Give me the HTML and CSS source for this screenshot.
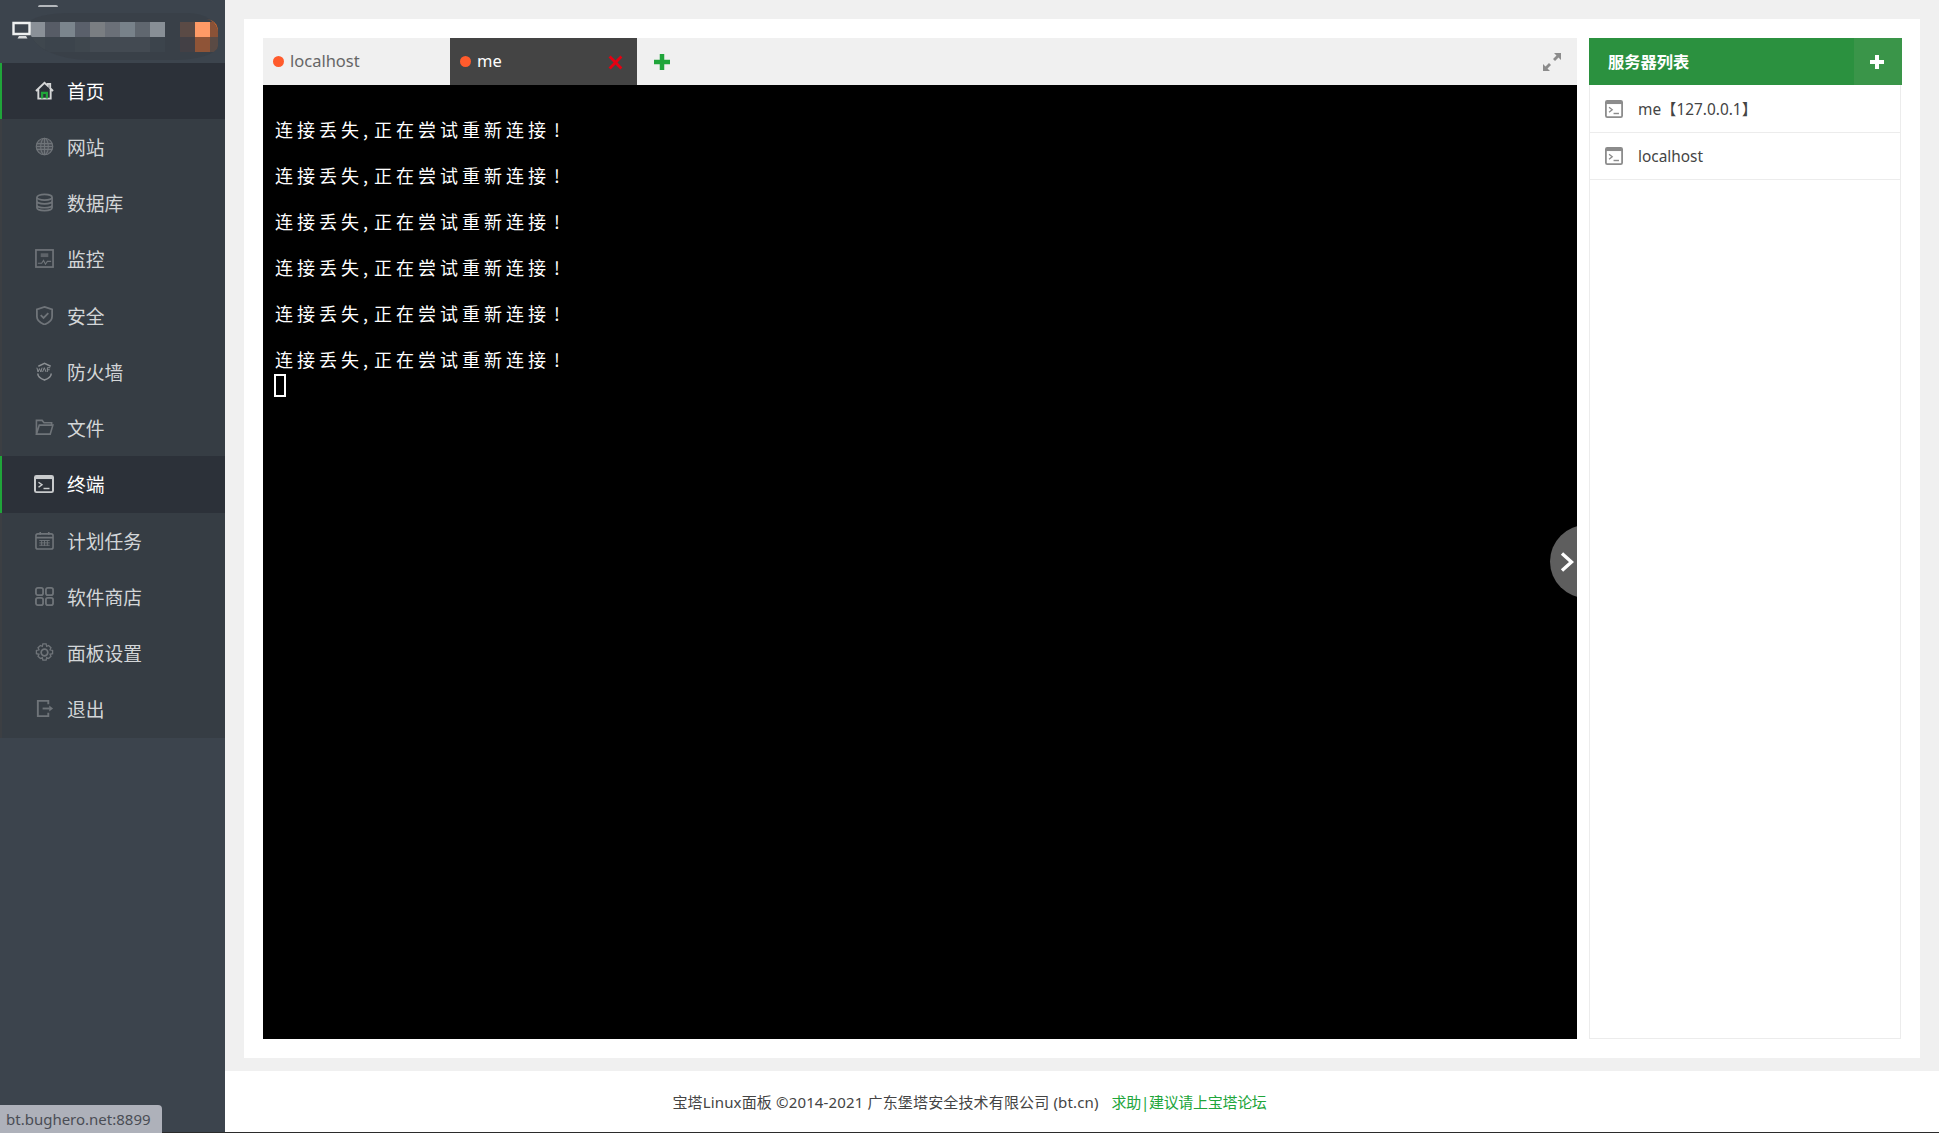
FILE: index.html
```html
<!DOCTYPE html>
<html lang="zh-CN">
<head>
<meta charset="utf-8">
<title>终端</title>
<link rel="stylesheet" href="styles.css">
</head>
<body>
<svg class="defs" width="0" height="0" aria-hidden="true">
  <symbol id="term" viewBox="0 0 20 20" preserveAspectRatio="none">
    <rect x="1" y="1" width="18" height="18" rx="1.5" fill="none" stroke="currentColor" stroke-width="2"/>
    <rect x="1" y="1" width="18" height="3.500" fill="currentColor"/>
    <path d="M4.500 8l3.500 2.800-3.500 2.800" fill="none" stroke="currentColor" stroke-width="1.500"/>
    <path d="M9.500 15h6" stroke="currentColor" stroke-width="1.600"/>
  </symbol>
</svg>
<div class="page">
  <aside class="sidebar">
    <div class="logo">
      <span class="arc"></span>
      <svg class="monitor" viewBox="0 0 20 20" width="20" height="20"><path d="M1.500 3h16v11h-16z" fill="none" stroke="#eef0f0" stroke-width="2.400"/><path d="M7 16h7l1.500 2.500h-10z" fill="#d8dadb"/></svg>
      <span class="crescent"></span>
      <div class="blur">
        <div class="blur-row">
          <i class="c1"></i><i class="c2"></i><i class="c3"></i><i class="c4"></i><i class="c5"></i><i class="c6"></i><i class="c7"></i><i class="c8"></i><i class="c9"></i><i class="c0"></i><i class="c10"></i><i class="c11"></i><i class="c12"></i>
        </div>
        <div class="blur-row">
          <i class="d1"></i><i class="d2"></i><i class="d2"></i><i class="d1"></i><i class="d3"></i><i class="d3"></i><i class="d3"></i><i class="d3"></i><i class="d2"></i><i class="c0"></i><i class="d4"></i><i class="d5"></i><i class="d6"></i>
        </div>
      </div>
    </div>
    <nav class="menu">
      <a class="item active"><svg class="ico" viewBox="0 0 20 20"><path d="M1 10.500l9-8.500 3.500 3.200V3h2.500v4.700l3 2.800M3.500 9v9.500h13V9" fill="none" stroke="#d5d6d7" stroke-width="2"/><path d="M7.500 18.500v-6h5v6" fill="none" stroke="#20a53a" stroke-width="2.400"/></svg>首页</a>
      <a class="item"><svg class="ico" viewBox="0 0 20 20"><g fill="none" stroke="currentColor" stroke-width="1.200"><circle cx="10" cy="10" r="8.700" fill="currentColor" fill-opacity=".35"/><ellipse cx="10" cy="10" rx="4" ry="8.700"/><path d="M10 1.300v17.400M1.800 7h16.400M1.800 13h16.400M1.300 10h17.400"/></g></svg>网站</a>
      <a class="item"><svg class="ico" viewBox="0 0 20 20"><g fill="none" stroke="currentColor" stroke-width="1.700"><ellipse cx="10" cy="4.500" rx="8" ry="3"/><path d="M2 4.500v11c0 1.700 3.600 3 8 3s8-1.300 8-3v-11M2 8.500c0 1.700 3.600 3 8 3s8-1.300 8-3M2 12.500c0 1.700 3.600 3 8 3s8-1.300 8-3"/></g></svg>数据库</a>
      <a class="item"><svg class="ico" viewBox="0 0 20 20"><rect x="1" y="1" width="18" height="18" fill="none" stroke="currentColor" stroke-width="1.800"/><path d="M6 4.500h8v4H6z" fill="currentColor" fill-opacity=".7"/><path d="M3 15h4l2-3 2 4 2-3h4" fill="none" stroke="currentColor" stroke-width="1.200"/></svg>监控</a>
      <a class="item"><svg class="ico" viewBox="0 0 20 20"><path d="M10 1l8 2.500V11c0 4-4 7-8 8.500C6 18 2 15 2 11V3.500z" fill="none" stroke="currentColor" stroke-width="1.900"/><path d="M6 9.500l3 3 5-5" fill="none" stroke="currentColor" stroke-width="1.900"/></svg>安全</a>
      <a class="item"><svg class="ico" viewBox="0 0 20 20"><path d="M3 12v.5c0 2.800 3.500 5 7 6.500 3.500-1.500 7-3.700 7-6.500V12" fill="none" stroke="#8b8f93" stroke-width="1.600"/><path d="M3.500 4.500L10 1.500l6.500 3" fill="none" stroke="#8b8f93" stroke-width="1.600"/><path d="M2 6l1.200 4.500L4.700 7l1.500 3.500L7.400 6M8 10.500L9.800 6l1.800 4.500M13 10.500V6h3M13 8.200h2.500" fill="none" stroke="#8b8f93" stroke-width="1"/></svg>防火墙</a>
      <a class="item"><svg class="ico" viewBox="0 0 20 20"><path d="M1.500 17V2.500h6l2 2.500h8v2.500M1.500 17h14.500L18.800 7.500H4.500z" fill="none" stroke="currentColor" stroke-width="1.700"/></svg>文件</a>
      <a class="item active"><svg class="ico term" viewBox="0 0 20 20" preserveAspectRatio="none"><use href="#term"/></svg>终端</a>
      <a class="item"><svg class="ico" viewBox="0 0 20 20"><rect x="1" y="3" width="18" height="16" rx="2" fill="none" stroke="currentColor" stroke-width="1.700"/><path d="M1 7h18M5.500 1v3M14.500 1v3" stroke="currentColor" stroke-width="1.700"/><path d="M4.500 10h11M4.500 12.500h11M4.500 15h11M7 9.500v6M10 9.500v6M13 9.500v6" stroke="currentColor" stroke-width="1"/></svg>计划任务</a>
      <a class="item"><svg class="ico" viewBox="0 0 20 20"><g fill="none" stroke="currentColor" stroke-width="1.900"><rect x="1" y="1" width="7.500" height="7.500" rx="2"/><rect x="11.500" y="1" width="7.500" height="7.500" rx="2"/><rect x="1" y="11.500" width="7.500" height="7.500" rx="2"/><rect x="11.500" y="11.500" width="7.500" height="7.500" rx="2"/></g></svg>软件商店</a>
      <a class="item"><svg class="ico" viewBox="0 0 20 20"><g fill="none" stroke="currentColor" stroke-width="1.800"><circle cx="10" cy="10" r="3.500"/><path d="M8.300 1h3.400l.6 2.500 2-.9 2.500 2.400-1 2.100 2.700.7v3.400l-2.700.7 1 2.100-2.500 2.400-2-.9-.6 2.500H8.300l-.6-2.500-2 .9-2.500-2.400 1-2.100-2.700-.7V7.800l2.700-.7-1-2.100 2.500-2.400 2 .9z" stroke-width="1.400"/></g></svg>面板设置</a>
      <a class="item"><svg class="ico" viewBox="0 0 20 20"><path d="M14 5.500V2H3v16h11v-3.500" fill="none" stroke="currentColor" stroke-width="2"/><path d="M8 10h7.500" stroke="currentColor" stroke-width="2"/><path d="M15 6.800L19 10l-4 3.200z" fill="currentColor"/></svg>退出</a>
    </nav>
  </aside>

  <div class="main">
    <div class="content">
      <section class="card">
        <div class="term-pane">
          <div class="tabs">
            <div class="tab"><span class="dot"></span>localhost</div>
            <div class="tab tab-on"><span class="dot"></span>me<svg class="close" viewBox="0 0 14 14" width="15" height="15"><path d="M1.500 1.500l11 11M12.500 1.500l-11 11" stroke="#e60012" stroke-width="2.600"/></svg></div>
            <svg class="add" viewBox="0 0 18 18" width="18" height="18"><path d="M9 1v16M1 9h16" stroke="#20a53a" stroke-width="4.500"/></svg>
            <svg class="expand" viewBox="0 0 20 20" width="20" height="20"><g fill="#8c8c8c"><path d="M12 1h7v7l-2.500-2.500-3.500 3.500-2-2 3.500-3.500z"/><path d="M8 19H1v-7l2.500 2.500 3.500-3.500 2 2-3.500 3.500z"/></g></svg>
          </div>
          <div class="screen">
            <div class="line"><span class="msg">连接丢失</span><span class="comma">,</span><span class="msg">正在尝试重新连接</span><span class="bang">!</span></div>
            <div class="line"><span class="msg">连接丢失</span><span class="comma">,</span><span class="msg">正在尝试重新连接</span><span class="bang">!</span></div>
            <div class="line"><span class="msg">连接丢失</span><span class="comma">,</span><span class="msg">正在尝试重新连接</span><span class="bang">!</span></div>
            <div class="line"><span class="msg">连接丢失</span><span class="comma">,</span><span class="msg">正在尝试重新连接</span><span class="bang">!</span></div>
            <div class="line"><span class="msg">连接丢失</span><span class="comma">,</span><span class="msg">正在尝试重新连接</span><span class="bang">!</span></div>
            <div class="line"><span class="msg">连接丢失</span><span class="comma">,</span><span class="msg">正在尝试重新连接</span><span class="bang">!</span></div>
            <div class="cursor"></div>
            <div class="toggle"><svg viewBox="0 0 14 20" width="14" height="20"><path d="M2 1.500L11.500 10 2 18.500" fill="none" stroke="#fff" stroke-width="3.400"/></svg></div>
          </div>
        </div>
        <div class="servers">
          <div class="servers-head"><span class="servers-title">服务器列表</span><span class="servers-add"><svg viewBox="0 0 16 16" width="16" height="16"><path d="M8 1v14M1 8h14" stroke="#fff" stroke-width="4"/></svg></span></div>
          <ul class="server-list">
            <li class="server"><svg class="srv-ico" viewBox="0 0 20 20" preserveAspectRatio="none"><use href="#term"/></svg>me【127.0.0.1】</li>
            <li class="server"><svg class="srv-ico" viewBox="0 0 20 20" preserveAspectRatio="none"><use href="#term"/></svg>localhost</li>
          </ul>
        </div>
      </section>
    </div>
    <footer class="footer"><span class="copy">宝塔Linux面板 ©2014-2021 广东堡塔安全技术有限公司 (bt.cn)</span><a class="help">求助|建议请上宝塔论坛</a></footer>
  </div>
</div>
<div class="status">bt.bughero.net:8899</div>
</body>
</html>
```
FILE: styles.css
```css
* { box-sizing: border-box; }
html, body { margin: 0; height: 100%; overflow: hidden; }
body { font-family: "Noto Sans", "Noto Sans CJK SC", sans-serif; background: #fff; color: #333; }
.defs { position: absolute; }
.page { display: flex; height: 1133px; border-bottom: 1px solid #2b2b2b; }

/* sidebar */
.sidebar { width: 225px; flex: none; background: #3c444d; position: relative; }
.logo { height: 62.500px; position: relative; }
.arc { position: absolute; left: 38px; top: 5px; width: 20px; height: 2px; background: #b4b8bc; border-radius: 10px 10px 0 0; }
.monitor { position: absolute; left: 12px; top: 20px; z-index: 1; }
.crescent { position: absolute; left: 204px; top: 19px; width: 14px; height: 24px; border-right: 3px solid #e8702a; border-radius: 0 12px 12px 0; }
.blur { position: absolute; left: 30px; top: 13px; width: 188px; height: 47px; padding-top: 9px; border-radius: 40px 30px 45px 60px / 10px 20px 14px 30px; background: rgba(56, 63, 71, .75); overflow: hidden; }
.blur-row { display: flex; height: 15px; }
.blur-row i { width: 15px; flex: none; }
.blur-row .c0 { width: 0; flex: 0 0 0; margin-right: 15px; }
.c1 { background: #8a9097; } .c2 { background: #575c66; } .c3 { background: #7b858d; }
.c4 { background: #5a606b; } .c5 { background: #7a7e82; } .c6 { background: #6b7078; }
.c7 { background: #78828a; } .c8 { background: #60676f; } .c9 { background: #888f96; }
.c10 { background: #5a4a45; } .c11 { background: #ff9a66; } .c12 { background: #8a5237; }
.d1 { background: #3f474e; } .d2 { background: #3c444c; } .d3 { background: #434a52; }
.d4 { background: #434045; } .d5 { background: #8f5437; } .d6 { background: #5a4a44; }
.menu { display: flex; flex-direction: column; background: #363d44; }
.item { height: 56.250px; display: flex; align-items: center; padding: 0 0 1px 33px; border-left: 2px solid #3c3f43; color: #d3d6d8; font-size: 18.750px; font-family: "Noto Sans CJK SC", sans-serif; }
.item.active { background: #2c3139; border-left-color: #20a53a; color: #fff; }
.ico { width: 19px; height: 19px; margin-right: 13px; color: #6f7479; flex: none; }
.ico.term { color: #c9cbcd; width: 20px; height: 18px; margin-left: -1px; }

/* main */
.main { flex: 1; min-width: 0; display: flex; flex-direction: column; }
.content { height: 1071px; padding: 19px 19px 13px; background: #f0f0f0; }
.card { height: 100%; background: #fff; padding: 19px 18px 19px 19px; display: flex; gap: 12px; }
.term-pane { width: 1314px; flex: none; display: flex; flex-direction: column; }
.tabs { height: 47px; background: #f0f0f0; display: flex; align-items: center; position: relative; flex: none; }
.tab { width: 187px; height: 47px; display: flex; align-items: center; padding: 0 0 2px 10px; color: #666; font-size: 16.500px; position: relative; }
.tab-on { background: #444; color: #fff; }
.dot { width: 11px; height: 11px; border-radius: 50%; background: #ff5b2c; margin: 2px 6px 0 0; }
.close { position: absolute; right: 14px; top: 17px; }
.add { margin-left: 16px; }
.expand { margin-left: auto; margin-right: 15px; }
.screen { flex: 1; background: #000; position: relative; overflow: hidden; padding: 10px 0 0 12px; color: #fff; font-family: "Noto Sans CJK SC", sans-serif; font-size: 18px; }
.line { height: 46px; display: flex; align-items: flex-end; line-height: 23px; }
.msg { letter-spacing: 4px; }
.comma { width: 11px; }
.bang { margin-left: 4px; }
.cursor { width: 12px; height: 23px; border: 2px solid #fff; margin: 3px 0 0 -1px; }
.toggle { position: absolute; right: -46px; top: 440px; width: 73px; height: 73px; border-radius: 50%; background: #5e5e5e; padding: 27px 0 0 10px; }
.toggle svg { display: block; }

/* servers */
.servers { flex: 1; display: flex; flex-direction: column; }
.servers-head { height: 47px; flex: none; background: #2b913f; display: flex; justify-content: space-between; color: #fff; }
.servers-title { font-size: 16.250px; font-weight: 700; line-height: 47px; padding-left: 19px; font-family: "Noto Sans CJK SC", sans-serif; }
.servers-add { width: 48px; background: #3a9549; display: flex; align-items: center; justify-content: center; padding-right: 2px; }
.server-list { list-style: none; margin: 0; padding: 0; flex: 1; border: 1px solid #ececec; border-top: 0; margin-right: 1px; }
.server { height: 47.600px; border-bottom: 1px solid #ececec; display: flex; align-items: center; padding: 1px 0 0 15px; color: #444; font-size: 15.400px; }
.srv-ico { width: 18px; height: 18px; color: #8c8c8c; margin-right: 15px; flex: none; }

/* footer */
.footer { flex: 1; display: flex; align-items: center; justify-content: center; padding-right: 225px; font-size: 15px; color: #444; }
.copy { letter-spacing: .15px; }
.help { margin-left: 13px; color: #20a53a; letter-spacing: -.3px; }

.status { position: absolute; left: 0; bottom: 0; height: 28px; width: 162px; background: #aeb1ba; border-top-right-radius: 4px; color: #4a4d55; font-size: 15px; line-height: 29px; padding-left: 6px; white-space: nowrap; }
```
